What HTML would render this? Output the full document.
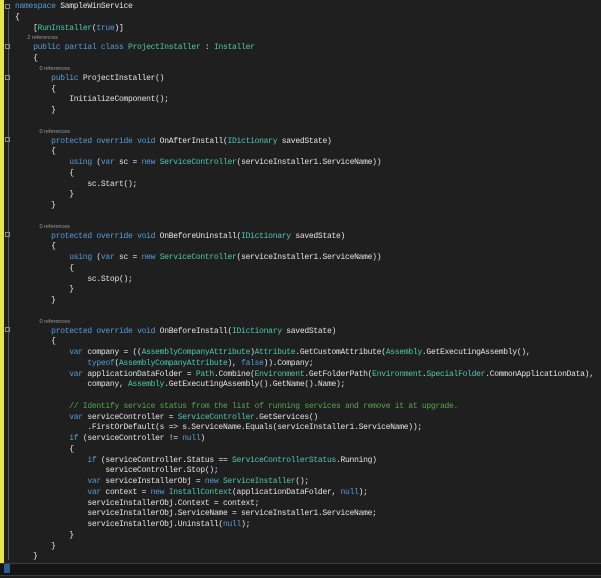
<!DOCTYPE html>
<html><head><meta charset="utf-8"><style>
body{margin:0;width:601px;height:578px;background:#1f1f1f;overflow:hidden;position:relative}
.y{position:absolute;left:0;top:0;width:4px;height:563px;background:#e6e64a}
.code{position:absolute;left:15px;top:2px;font-family:"Liberation Mono",monospace;font-size:8px;letter-spacing:-0.28px;color:#e4e4e4;white-space:pre}
.l{height:10.75px;line-height:10.75px}
.r{height:9px;line-height:9px;font-family:"Liberation Sans",sans-serif;font-size:5.5px;letter-spacing:0;color:#9a9a9a}
.k{color:#569cd6}.t{color:#4ec9b0}.c{color:#57a64a}
.m{position:absolute;left:5px;width:5px;height:5px;border:1px solid #888;box-sizing:border-box}
.cur{position:absolute;left:0;top:563px;width:601px;height:11px;background:#151515;border-top:1px solid #3a3a3a;border-bottom:1px solid #3a3a3a}
.gl{position:absolute;left:8px;width:1px;background:#555}
</style></head><body>
<div class="y"></div>
<div class="gl" style="top:10px;height:550px"></div>
<div class="m" style="top:4px"></div>
<div class="m" style="top:44px"></div>
<div class="m" style="top:75px"></div>
<div class="m" style="top:137px"></div>
<div class="m" style="top:232px"></div>
<div class="m" style="top:327px"></div>
<div class="cur"></div>
<div style="position:absolute;left:4px;top:564px;width:6px;height:9px;background:#2d5a9a"></div>
<div class="code"><div class="l"><span class="k">namespace</span> SampleWinService</div><div class="l">{</div><div class="l">    [<span class="t">RunInstaller</span>(<span class="k">true</span>)]</div><div class="r">        2 references</div><div class="l">    <span class="k">public partial class</span> <span class="t">ProjectInstaller</span> : <span class="t">Installer</span></div><div class="l">    {</div><div class="r">                0 references</div><div class="l">        <span class="k">public</span> ProjectInstaller()</div><div class="l">        {</div><div class="l">            InitializeComponent();</div><div class="l">        }</div><div class="l"> </div><div class="r">                0 references</div><div class="l">        <span class="k">protected override void</span> OnAfterInstall(<span class="t">IDictionary</span> savedState)</div><div class="l">        {</div><div class="l">            <span class="k">using</span> (<span class="k">var</span> sc = <span class="k">new</span> <span class="t">ServiceController</span>(serviceInstaller1.ServiceName))</div><div class="l">            {</div><div class="l">                sc.Start();</div><div class="l">            }</div><div class="l">        }</div><div class="l"> </div><div class="r">                0 references</div><div class="l">        <span class="k">protected override void</span> OnBeforeUninstall(<span class="t">IDictionary</span> savedState)</div><div class="l">        {</div><div class="l">            <span class="k">using</span> (<span class="k">var</span> sc = <span class="k">new</span> <span class="t">ServiceController</span>(serviceInstaller1.ServiceName))</div><div class="l">            {</div><div class="l">                sc.Stop();</div><div class="l">            }</div><div class="l">        }</div><div class="l"> </div><div class="r">                0 references</div><div class="l">        <span class="k">protected override void</span> OnBeforeInstall(<span class="t">IDictionary</span> savedState)</div><div class="l">        {</div><div class="l">            <span class="k">var</span> company = ((<span class="t">AssemblyCompanyAttribute</span>)<span class="t">Attribute</span>.GetCustomAttribute(<span class="t">Assembly</span>.GetExecutingAssembly(),</div><div class="l">                <span class="k">typeof</span>(<span class="t">AssemblyCompanyAttribute</span>), <span class="k">false</span>)).Company;</div><div class="l">            <span class="k">var</span> applicationDataFolder = <span class="t">Path</span>.Combine(<span class="t">Environment</span>.GetFolderPath(<span class="t">Environment</span>.<span class="t">SpecialFolder</span>.CommonApplicationData),</div><div class="l">                company, <span class="t">Assembly</span>.GetExecutingAssembly().GetName().Name);</div><div class="l"> </div><div class="l">            <span class="c">// Identify service status from the list of running services and remove it at upgrade.</span></div><div class="l">            <span class="k">var</span> serviceController = <span class="t">ServiceController</span>.GetServices()</div><div class="l">                .FirstOrDefault(s =&gt; s.ServiceName.Equals(serviceInstaller1.ServiceName));</div><div class="l">            <span class="k">if</span> (serviceController != <span class="k">null</span>)</div><div class="l">            {</div><div class="l">                <span class="k">if</span> (serviceController.Status == <span class="t">ServiceControllerStatus</span>.Running)</div><div class="l">                    serviceController.Stop();</div><div class="l">                <span class="k">var</span> serviceInstallerObj = <span class="k">new</span> <span class="t">ServiceInstaller</span>();</div><div class="l">                <span class="k">var</span> context = <span class="k">new</span> <span class="t">InstallContext</span>(applicationDataFolder, <span class="k">null</span>);</div><div class="l">                serviceInstallerObj.Context = context;</div><div class="l">                serviceInstallerObj.ServiceName = serviceInstaller1.ServiceName;</div><div class="l">                serviceInstallerObj.Uninstall(<span class="k">null</span>);</div><div class="l">            }</div><div class="l">        }</div><div class="l">    }</div><div class="l"> </div></div>
</body></html>
